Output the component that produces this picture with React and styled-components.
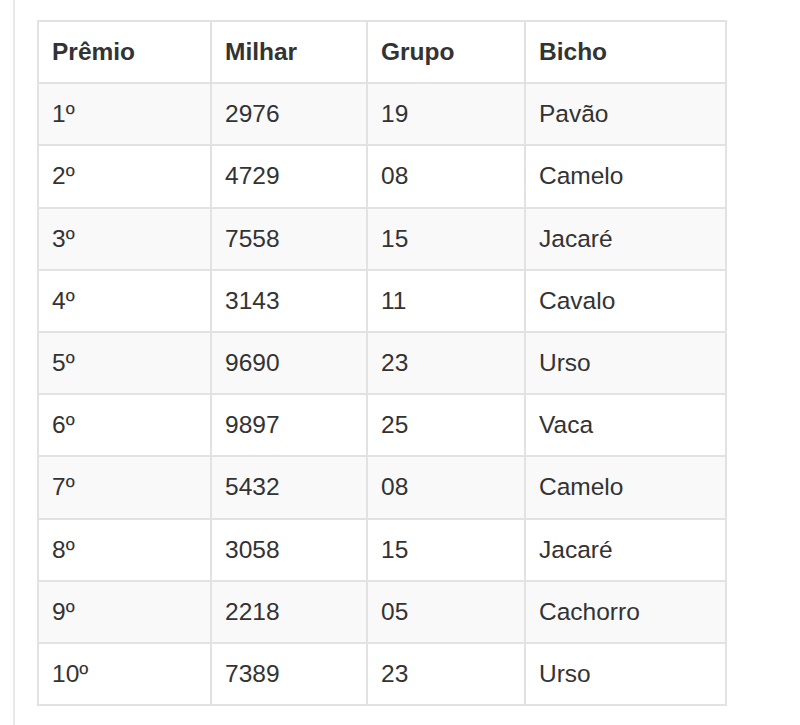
import styled, { createGlobalStyle } from 'styled-components';

const GlobalStyle = createGlobalStyle`
  html, body {
    margin: 0;
    padding: 0;
    background: #ffffff;
  }
  body {
    font-family: "Liberation Sans", Arial, Helvetica, sans-serif;
    color: #333333;
  }
`;

const Page = styled.div`
  width: 800px;
  height: 725px;
  overflow: hidden;
  display: flex;
`;

const SideRule = styled.div`
  width: 13px;
  flex: none;
  border-right: 2px solid #e8e8e8;
`;

const Content = styled.div`
  padding: 20px 0 0 22px;
`;

const Table = styled.table`
  width: 688px;
  table-layout: fixed;
  border-collapse: collapse;
  border: 2px solid #e2e2e2;
  font-size: 24.5px;
`;

const Row = styled.tr`
  height: 62.2px;
  background: ${p => (p.$striped ? '#f9f9f9' : '#ffffff')};
`;

const Head = styled.th`
  text-align: left;
  font-weight: bold;
  padding: 0 13px;
  vertical-align: middle;
  border: 2px solid #e2e2e2;
  color: #333;
`;

const Cell = styled.td`
  padding: 0 13px;
  vertical-align: middle;
  border: 2px solid #e2e2e2;
  color: #333;
`;

const results = [
  ['1º', '2976', '19', 'Pavão'],
  ['2º', '4729', '08', 'Camelo'],
  ['3º', '7558', '15', 'Jacaré'],
  ['4º', '3143', '11', 'Cavalo'],
  ['5º', '9690', '23', 'Urso'],
  ['6º', '9897', '25', 'Vaca'],
  ['7º', '5432', '08', 'Camelo'],
  ['8º', '3058', '15', 'Jacaré'],
  ['9º', '2218', '05', 'Cachorro'],
  ['10º', '7389', '23', 'Urso'],
];

export default function App() {
  return (
    <>
      <GlobalStyle />
      <Page>
        <SideRule />
        <Content>
          <Table>
            <colgroup>
              <col style={{ width: 173 }} />
              <col style={{ width: 156 }} />
              <col style={{ width: 158 }} />
              <col style={{ width: 201 }} />
            </colgroup>
            <thead>
              <Row>
                <Head>Prêmio</Head>
                <Head>Milhar</Head>
                <Head>Grupo</Head>
                <Head>Bicho</Head>
              </Row>
            </thead>
            <tbody>
              {results.map((r, i) => (
                <Row key={r[0]} $striped={i % 2 === 0}>
                  {r.map((v, j) => (
                    <Cell key={j}>{v}</Cell>
                  ))}
                </Row>
              ))}
            </tbody>
          </Table>
        </Content>
      </Page>
    </>
  );
}
